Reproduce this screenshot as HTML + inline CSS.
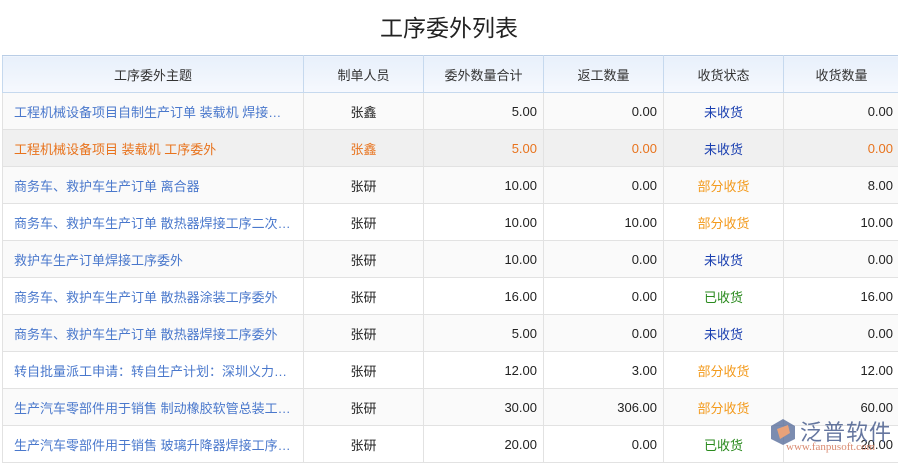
<!DOCTYPE html>
<html><head><meta charset="utf-8"><style>
*{margin:0;padding:0;box-sizing:border-box}
body{width:898px;height:463px;overflow:hidden;background:#fff;font-family:"Liberation Sans","Noto Sans CJK SC",sans-serif;font-size:13px;color:#222;position:relative}
h1{position:absolute;top:9px;left:0;width:898px;text-align:center;font-weight:normal;font-size:23px;color:#222}
table{position:absolute;top:55px;left:2px;border-collapse:collapse;table-layout:fixed;width:897px}
th{height:37px;font-weight:normal;background:linear-gradient(#e8f0fb,#f6f9fe);border:1px solid #c6d9ee;border-top:1px solid #b9cde6;color:#333}
td{height:37px;border:1px solid #e2e2e2;padding:0 6px;white-space:nowrap;overflow:hidden}
td:first-child{padding-left:11px}
tr:nth-child(even) td{background:#fafafa}
td.l{color:#4a78cc}
td.c{text-align:center}
td.r{text-align:right}
tr.o td{background:#f0f0f0;color:#e8731d}
tr.o td.s{color:#1a3fb0}
.b{color:#1a3fb0}.p{color:#f39a1c}.g{color:#2a8a1e}
.logo{position:absolute;left:768px;top:413px;width:130px;height:50px}
</style></head><body>
<h1>工序委外列表</h1>
<table>
<colgroup><col style="width:301px"><col style="width:120px"><col style="width:120px"><col style="width:120px"><col style="width:120px"><col style="width:116px"></colgroup>
<tr><th>工序委外主题</th><th>制单人员</th><th>委外数量合计</th><th>返工数量</th><th>收货状态</th><th>收货数量</th></tr>
<tr><td class="l">工程机械设备项目自制生产订单 装载机 焊接…</td><td class="c">张鑫</td><td class="r">5.00</td><td class="r">0.00</td><td class="c b">未收货</td><td class="r">0.00</td></tr>
<tr class="o"><td>工程机械设备项目 装载机 工序委外</td><td class="c">张鑫</td><td class="r">5.00</td><td class="r">0.00</td><td class="c s">未收货</td><td class="r">0.00</td></tr>
<tr><td class="l">商务车、救护车生产订单 离合器</td><td class="c">张研</td><td class="r">10.00</td><td class="r">0.00</td><td class="c p">部分收货</td><td class="r">8.00</td></tr>
<tr><td class="l">商务车、救护车生产订单 散热器焊接工序二次…</td><td class="c">张研</td><td class="r">10.00</td><td class="r">10.00</td><td class="c p">部分收货</td><td class="r">10.00</td></tr>
<tr><td class="l">救护车生产订单焊接工序委外</td><td class="c">张研</td><td class="r">10.00</td><td class="r">0.00</td><td class="c b">未收货</td><td class="r">0.00</td></tr>
<tr><td class="l">商务车、救护车生产订单 散热器涂装工序委外</td><td class="c">张研</td><td class="r">16.00</td><td class="r">0.00</td><td class="c g">已收货</td><td class="r">16.00</td></tr>
<tr><td class="l">商务车、救护车生产订单 散热器焊接工序委外</td><td class="c">张研</td><td class="r">5.00</td><td class="r">0.00</td><td class="c b">未收货</td><td class="r">0.00</td></tr>
<tr><td class="l">转自批量派工申请：转自生产计划：深圳义力…</td><td class="c">张研</td><td class="r">12.00</td><td class="r">3.00</td><td class="c p">部分收货</td><td class="r">12.00</td></tr>
<tr><td class="l">生产汽车零部件用于销售 制动橡胶软管总装工…</td><td class="c">张研</td><td class="r">30.00</td><td class="r">306.00</td><td class="c p">部分收货</td><td class="r">60.00</td></tr>
<tr><td class="l">生产汽车零部件用于销售 玻璃升降器焊接工序…</td><td class="c">张研</td><td class="r">20.00</td><td class="r">0.00</td><td class="c g">已收货</td><td class="r">20.00</td></tr>
</table>
<div class="logo">
<svg width="30" height="30" style="position:absolute;left:0;top:4px" viewBox="0 0 30 30"><path d="M15 2 L27 9 L27 22 L15 28 L3 22 L3 9Z" fill="#5a6f9c" opacity=".8"/><path d="M9 12 L20 8 L22 16 L12 22Z" fill="#e8a27a"/></svg>
<span style="position:absolute;left:32px;top:2px;font-size:22px;color:#4b5f8f;letter-spacing:1px;opacity:.85">泛普软件</span>
<span style="position:absolute;left:18px;top:28px;font-family:'Liberation Serif',serif;font-size:11px;color:#d98a70">www.fanpusoft.com</span>
</div>
</body></html>
